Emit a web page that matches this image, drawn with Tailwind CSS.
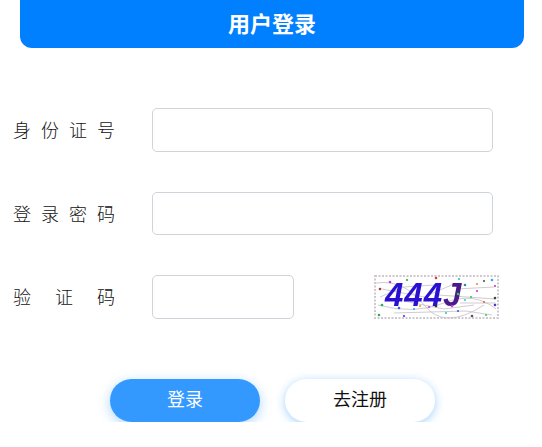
<!DOCTYPE html>
<html>
<head>
<meta charset="utf-8">
<script src="https://cdn.jsdelivr.net/npm/@tailwindcss/browser@4"></script>
</head>
<body class="bg-white font-['Liberation_Sans','Noto_Sans_CJK_SC',sans-serif] overflow-hidden">
  <div class="mx-5 w-[504px] h-12 bg-[#0080ff] rounded-b-xl flex items-center justify-center text-white text-[22px] font-bold">用户登录</div>

  <div class="mt-[60.2px] flex items-center h-[43.6px] pl-[13px]">
    <label class="w-[139px] pt-[3px] text-[18px] font-light text-[#111] tracking-[10px] whitespace-nowrap">身份证号</label>
    <input type="text" class="w-[341px] h-full border border-[#ced4da] rounded-[5px]">
  </div>
  <div class="mt-10 flex items-center h-[43.6px] pl-[13px]">
    <label class="w-[139px] pt-[3px] text-[18px] font-light text-[#111] tracking-[10px] whitespace-nowrap">登录密码</label>
    <input type="password" class="w-[341px] h-full border border-[#ced4da] rounded-[5px]">
  </div>
  <div class="mt-10 flex items-center h-[43.6px] pl-[13px]">
    <label class="w-[139px] pt-[3px] text-[18px] font-light text-[#111] tracking-[24px] whitespace-nowrap">验证码</label>
    <input type="text" class="w-[142px] h-full border border-[#ced4da] rounded-[5px]">
    <svg class="ml-20 block blur-[0.4px]" width="125" height="44" viewBox="0 0 125 44">
      <rect x="1" y="1" width="123" height="42" fill="#fff" stroke="#cfc8cf" stroke-width="2" stroke-dasharray="2 1.5"/>
      <g fill="none" stroke="#c4bfc4" stroke-width="0.8">
        <path d="M2 8 Q30 4 50 30 T110 30"/>
        <path d="M4 30 Q40 40 70 28 T122 34"/>
        <path d="M8 14 L50 22 L82 8"/>
        <path d="M64 20 L122 24"/>
        <path d="M20 38 L92 36 L118 40"/>
        <path d="M82 14 L120 12"/>
        <path d="M30 26 L70 34 L100 30"/>
        <path d="M86 28 L122 28"/>
        <path d="M6 22 L30 12 L60 10"/>
      </g>
      <text x="11" y="31" font-family="Liberation Sans" font-size="33" font-weight="700" font-style="italic" letter-spacing="1" fill="#2a10d0">444<tspan fill="#4a1a8c">J</tspan></text>
      <g>
        <circle cx="62" cy="3" r="1.3" fill="#e33"/><circle cx="33" cy="5" r="1.1" fill="#3a3"/>
        <circle cx="16" cy="7" r="1.3" fill="#c3e"/><circle cx="85" cy="4" r="1.1" fill="#1cc"/>
        <circle cx="110" cy="6" r="1.1" fill="#555"/><circle cx="118" cy="5" r="1.3" fill="#3ae"/>
        <circle cx="103" cy="9" r="1.1" fill="#e83"/><circle cx="91" cy="10" r="1.3" fill="#38a"/>
        <circle cx="121" cy="11" r="1.1" fill="#c3c"/><circle cx="6" cy="14" r="1.3" fill="#a33"/>
        <circle cx="103" cy="16" r="1.1" fill="#c3e"/><circle cx="84" cy="19" r="1.3" fill="#3c3"/>
        <circle cx="97" cy="22" r="1.1" fill="#3c6"/><circle cx="121" cy="23" r="1.3" fill="#444"/>
        <circle cx="91" cy="25" r="1.1" fill="#3cd"/><circle cx="8" cy="30" r="1.3" fill="#3a5"/>
        <circle cx="25" cy="33" r="1.3" fill="#36e"/><circle cx="55" cy="32" r="1.1" fill="#d3d"/>
        <circle cx="62" cy="31" r="1.3" fill="#333"/><circle cx="78" cy="31" r="1.3" fill="#c3e"/>
        <circle cx="110" cy="27" r="1.1" fill="#e63"/><circle cx="121" cy="30" r="1.3" fill="#53c"/>
        <circle cx="40" cy="34" r="1.1" fill="#3ae"/><circle cx="72" cy="38" r="1.1" fill="#3c9"/>
        <circle cx="30" cy="41" r="1.1" fill="#53e"/><circle cx="5" cy="40" r="1.3" fill="#3a5"/>
        <circle cx="98" cy="41" r="1.3" fill="#555"/><circle cx="112" cy="40" r="1.1" fill="#3c6"/>
        <circle cx="46" cy="31" r="1.1" fill="#e93"/><circle cx="84" cy="36" r="1.1" fill="#36c"/>
      </g>
    </svg>
  </div>

  <div class="mt-[60px] ml-[110px] flex gap-[25px]">
    <button class="w-[150px] h-[43px] rounded-full bg-[#3399ff] text-white text-[18px] shadow-[0_3px_12px_rgba(51,153,255,0.4)]">登录</button>
    <button class="w-[150px] h-[43px] rounded-full bg-white text-[#111] text-[18px] shadow-[0_2px_10px_rgba(51,153,255,0.45)]">去注册</button>
  </div>
</body>
</html>
